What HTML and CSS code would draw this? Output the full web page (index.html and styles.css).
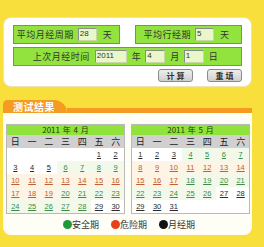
FILE: index.html
```html
<!DOCTYPE html>
<html lang="zh-CN">
<head>
    <meta charset="UTF-8">
    <title>安全期计算</title>
    <link rel="stylesheet" href="styles.css">
</head>
<body>
<div class="page">
    <div class="form-panel">
        <div class="row">
            <div class="field half">
                <span class="label">平均月经周期</span>
                <input type="text" class="box w19" value="28">
                <span class="unit">天</span>
            </div>
            <div class="field half">
                <span class="label">平均行经期</span>
                <input type="text" class="box w19" value="5">
                <span class="unit">天</span>
            </div>
        </div>
        <div class="row">
            <div class="field full">
                <span class="label">上次月经时间</span>
                <input type="text" class="box w32" value="2011">
                <span class="unit">年</span>
                <input type="text" class="box w20" value="4">
                <span class="unit">月</span>
                <input type="text" class="box w20" value="1">
                <span class="unit">日</span>
            </div>
        </div>
        <div class="actions">
            <button>计 算</button>
            <button>重 填</button>
        </div>
    </div>

    <div class="result">
        <div class="tabbar">
            <div class="tab">测试结果</div>
            <div class="tabline"></div>
        </div>
        <div class="result-body">
            <div class="calendars">
                <div class="cal" id="cal-apr"></div>
                <div class="cal" id="cal-may"></div>
            </div>
            <div class="legend">
                <span class="dot green"></span><span class="legend-text">安全期</span>
                <span class="dot red"></span><span class="legend-text">危险期</span>
                <span class="dot black"></span><span class="legend-text">月经期</span>
            </div>
        </div>
    </div>
</div>

<script>
    // p = 月经期, s = 安全期, d = 危险期
    function dayType(month, d) {
        if (month === 4) {
            if (d <= 5 || d >= 29) return 'p';
            if (d <= 9 || (d >= 20 && d <= 28)) return 's';
            return 'd';
        }
        if (d <= 3 || d >= 27) return 'p';
        if (d <= 7 || (d >= 18 && d <= 26)) return 's';
        return 'd';
    }

    function buildCalendar(el, year, month, firstDay, days) {
        let html = '<div class="cal-title">' + year + ' 年 ' + month + ' 月</div>';
        html += '<div class="cal-week">';
        ['日', '一', '二', '三', '四', '五', '六'].forEach(w => {
            html += '<span>' + w + '</span>';
        });
        html += '</div><div class="cal-days">';
        for (let i = 0; i < firstDay; i++) {
            html += '<span class="day"></span>';
        }
        for (let d = 1; d <= days; d++) {
            html += '<span class="day t-' + dayType(month, d) + '"><u>' + d + '</u></span>';
        }
        html += '</div>';
        el.innerHTML = html;
    }

    buildCalendar(document.getElementById('cal-apr'), 2011, 4, 5, 30);
    buildCalendar(document.getElementById('cal-may'), 2011, 5, 0, 31);
</script>
</body>
</html>
```

FILE: styles.css
```css
body {
    margin: 0;
    background-color: #f9df3b;
    font-family: "Noto Sans CJK SC", "Liberation Sans", sans-serif;
    color: #333;
}
.page {
    width: 264px;
    height: 247px;
    padding: 17px 0 0 3px;
    box-sizing: border-box;
}
.form-panel {
    width: 249px;
    height: 70px;
    box-sizing: border-box;
    padding: 7px 9px;
    background-color: #ffffff;
    border: 1px solid #efe4b0;
    border-radius: 8px;
}
.row {
    display: flex;
    gap: 15px;
    width: 229px;
    margin-bottom: 3px;
}
.field {
    display: flex;
    align-items: center;
    justify-content: center;
    height: 19px;
    box-sizing: border-box;
    background-color: #93e33f;
    border: 1px solid #858585;
    font-size: 9px;
    letter-spacing: 0.5px;
}
.half {
    width: 107px;
}
.full {
    width: 229px;
}
.label {
    margin-right: 4px;
}
.unit {
    margin: 0 4px 0 6px;
}
.full .label {
    margin-right: 5px;
}
.full .unit {
    margin: 0 4px 0 5px;
}
.box {
    height: 13px;
    box-sizing: border-box;
    padding: 0 0 2px 1px;
    margin: 0;
    border: 1px solid #8c8c8c;
    border-right-color: #c8d8a8;
    border-bottom-color: #c8d8a8;
    background-color: #eaf7c9;
    font-family: "Liberation Sans", sans-serif;
    font-size: 8px;
    color: #333;
    line-height: 9px;
    vertical-align: top;
}
.w19 { width: 19px; }
.w20 { width: 20px; }
.w32 { width: 32px; }
.actions {
    display: flex;
    justify-content: flex-end;
    gap: 14px;
}
button {
    width: 35px;
    height: 13px;
    padding: 0;
    border: 1px solid #8a8a8a;
    border-radius: 3px;
    background: linear-gradient(#eeeeee, #cfcfcf);
    font-family: "Noto Sans CJK SC", sans-serif;
    font-size: 8px;
    font-weight: bold;
    color: #333;
    line-height: 11px;
}
.result {
    width: 249px;
    margin-top: 13px;
}
.tabbar {
    display: flex;
    align-items: flex-end;
    height: 13px;
}
.tab {
    width: 64px;
    height: 13px;
    box-sizing: border-box;
    padding-left: 10px;
    background-color: #f59b22;
    border-radius: 5px 14px 0 0;
    color: #ffffff;
    font-size: 10px;
    font-weight: bold;
    line-height: 13px;
    letter-spacing: 0.5px;
}
.tabline {
    flex: 1;
    height: 5px;
    background-color: #f59b22;
}
.result-body {
    height: 122px;
    box-sizing: border-box;
    padding: 11px 0 0 3px;
    background-color: #fffef6;
    border-radius: 0 0 8px 8px;
}
.calendars {
    display: flex;
    gap: 6px;
}
.cal {
    width: 119px;
    box-sizing: border-box;
    border: 1px solid #b9b9b9;
    background-color: #ffffff;
}
.cal-title {
    height: 10px;
    background-color: #8fe33a;
    text-align: center;
    font-size: 8px;
    line-height: 10px;
    word-spacing: 1px;
    color: #223a10;
}
.cal-week, .cal-days {
    display: grid;
    grid-template-columns: repeat(7, 1fr);
}
.cal-week {
    height: 13px;
    background-color: #d0d0d0;
    font-size: 9px;
    line-height: 13px;
    text-align: center;
    color: #222;
}
.day {
    height: 13px;
    text-align: center;
    font-family: "Liberation Sans", sans-serif;
    font-size: 7.5px;
    line-height: 13px;
}
.day u {
    text-underline-offset: 1px;
}
.t-p {
    color: #2a2a2a;
}
.t-s {
    color: #3c8c4a;
    background-color: #f3f9ea;
}
.t-d {
    color: #c4602c;
    background-color: #fdf4e6;
}
.legend {
    display: flex;
    align-items: center;
    justify-content: center;
    margin-top: 4px;
    font-size: 9px;
    color: #333;
}
.dot {
    width: 9px;
    height: 9px;
    border-radius: 50%;
}
.legend-text {
    margin-right: 12px;
}
.legend-text:last-child {
    margin-right: 0;
}
.green { background-color: #1d9a3a; }
.red { background-color: #e8401a; }
.black { background-color: #111111; }
```
